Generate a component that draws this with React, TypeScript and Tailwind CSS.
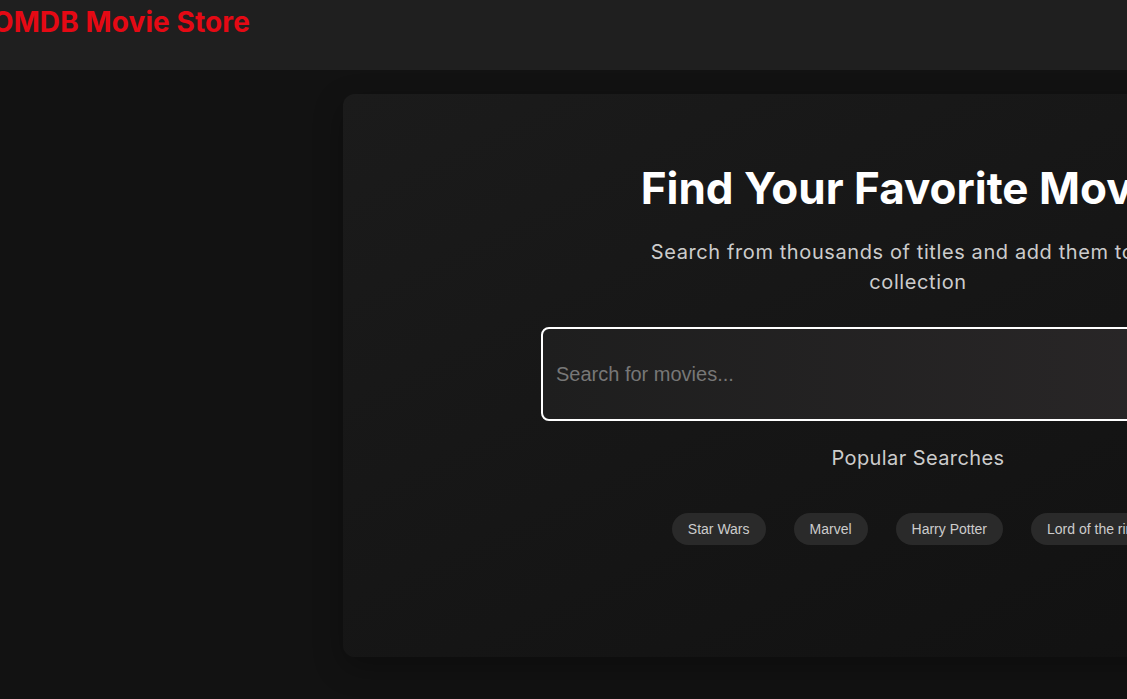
import { useEffect, useRef, useState } from 'react'

const popular = ['Star Wars', 'Marvel', 'Harry Potter', 'Lord of the rings']

export default function App() {
  const [query, setQuery] = useState('')
  const inputRef = useRef<HTMLInputElement>(null)

  // focus the search box without scrolling the page sideways
  useEffect(() => {
    inputRef.current?.focus({ preventScroll: true })
  }, [])

  return (
    <div className="w-[1127px] h-[699px] overflow-hidden bg-[#121212] font-['Inter',sans-serif]">
      {/* Header */}
      <header className="h-[70px] bg-[#1f1f1f]">
        <h1 className="-ml-[8px] pt-[4px] text-[28px] leading-[36px] font-bold tracking-[0.1px] text-[#e50914] whitespace-nowrap">
          OMDB Movie Store
        </h1>
      </header>

      {/* Search card */}
      <main className="pt-6 pl-[343px]">
        <section className="w-[1150px] h-[563px] rounded-xl bg-linear-to-br from-[#1b1b1b] to-[#101010] shadow-[0_10px_30px_rgba(0,0,0,0.3)] flex flex-col items-center pt-[67px]">
          <h2 className="text-[44px] leading-[54px] font-bold text-white whitespace-nowrap">
            Find Your Favorite Movies
          </h2>
          <p className="mt-[22px] w-[600px] text-center text-[20px] leading-[30px] tracking-[0.6px] text-[#cccccc]">
            Search from thousands of titles and add them to your collection
          </p>

          <div className="mt-[30px] w-[754px]">
            <input
              ref={inputRef}
              value={query}
              onChange={(e) => setQuery(e.target.value)}
              placeholder="Search for movies..."
              className="w-full h-[94px] px-[13px] rounded-lg border-2 border-white bg-linear-to-r from-[#1e1e1e] to-[#2b2829] text-[20px] text-white placeholder:text-[#777] font-['Liberation_Sans',Arial,sans-serif] outline-none caret-white"
            />
          </div>

          <h3 className="mt-[22px] text-[20px] leading-[30px] tracking-[0.4px] text-[#cccccc]">Popular Searches</h3>

          <div className="mt-[40px] flex gap-7">
            {popular.map((p) => (
              <button
                key={p}
                onClick={() => setQuery(p)}
                className="h-8 px-4 rounded-full bg-[#2a2a2a] text-[14px] text-[#cccccc] font-['Liberation_Sans',Arial,sans-serif] whitespace-nowrap"
              >
                {p}
              </button>
            ))}
          </div>
        </section>
      </main>
    </div>
  )
}
